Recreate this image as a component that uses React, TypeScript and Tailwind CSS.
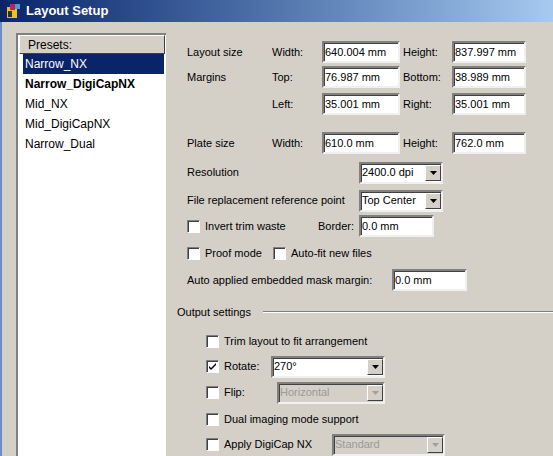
import React from "react";

const input =
  "h-[22px] bg-white border-2 border-t-[#808080] border-l-[#808080] border-b-[#f0f0f0] border-r-[#f0f0f0] shadow-[inset_1px_1px_0_#404040] px-[1px] flex items-center";

function Box({ w, v }: { w: string; v: string }) {
  return <div className={`${input} ${w}`}>{v}</div>;
}

function Check({ on = false }: { on?: boolean }) {
  return (
    <div className="w-[13px] h-[13px] bg-white border border-t-[#808080] border-l-[#808080] border-b-white border-r-white shadow-[inset_1px_1px_0_#404040] flex items-center justify-center shrink-0">
      {on && (
        <svg width="9" height="9" viewBox="0 0 9 9">
          <path d="M1 4l2 2 5-5v2L3 8 1 6z" fill="#000" />
        </svg>
      )}
    </div>
  );
}

function Select({ w, v, dis = false }: { w: string; v: string; dis?: boolean }) {
  return (
    <div className={`${input} ${w} justify-between pr-0 ${dis ? "!bg-[#d4d0c8] text-[#9a9a9a]" : "text-black"}`}>
      <span>{v}</span>
      <div className="w-[16px] h-[16px] bg-[#d4d0c8] border border-t-white border-l-white border-b-[#404040] border-r-[#404040] flex items-center justify-center">
        <svg width="7" height="4" viewBox="0 0 7 4">
          <path d="M0 0h7L3.5 4z" fill={dis ? "#a0a0a0" : "#000"} />
        </svg>
      </div>
    </div>
  );
}

export default function App() {
  const presets = ["Narrow_NX", "Narrow_DigiCapNX", "Mid_NX", "Mid_DigiCapNX", "Narrow_Dual"];
  return (
    <div className="w-[553px] h-[456px] overflow-hidden bg-[#d4d0c8] text-[11px] text-black whitespace-nowrap flex flex-col" style={{ fontFamily: "'Liberation Sans', Tahoma, sans-serif" }}>
      <div className="h-[22px] shrink-0 flex items-center gap-[4px] pl-[6px] text-white font-bold text-[13px] bg-gradient-to-r from-[#0a246a] to-[#a6caf0]">
        <svg width="16" height="16" viewBox="0 0 16 16">
          <rect x="1" y="4" width="10" height="11" fill="#f0c020" />
          <rect x="4" y="1" width="5" height="6" fill="#c02060" />
          <rect x="9" y="1" width="5" height="5" fill="#40a0d0" />
          <rect x="2" y="8" width="4" height="6" fill="#303030" />
        </svg>
        Layout Setup
      </div>
      <div className="flex flex-1 border-l-2 border-[#6c8cc8]">
        <div className="w-[14px] shrink-0" />
        <div className="w-[150px] shrink-0 mt-[11px] bg-white border-l-2 border-t-2 border-[#808080] flex flex-col text-[12px]">
          <div className="h-[19px] mx-[1px] bg-[#d4d0c8] border border-t-white border-l-white border-b-[#404040] border-r-[#404040] pl-[8px] flex items-center">Presets:</div>
          {presets.map((p, i) => (
            <div key={p} className={`h-[20px] ml-[5px] mr-[2px] px-[2px] flex items-center ${i === 0 ? "bg-[#0a246a] text-white" : ""} ${i === 1 ? "font-bold" : ""}`}>{p}</div>
          ))}
        </div>
        <div className="flex-1 pl-[21px] pt-[19px] flex flex-col">
          <div className="flex items-center h-[22px]">
            <span className="w-[85px]">Layout size</span><span className="w-[50px]">Width:</span>
            <Box w="w-[78px]" v="640.004 mm" /><span className="w-[52px] pl-[3px]">Height:</span><Box w="w-[74px]" v="837.997 mm" />
          </div>
          <div className="flex items-center h-[22px] mt-[3px]">
            <span className="w-[85px]">Margins</span><span className="w-[50px]">Top:</span>
            <Box w="w-[78px]" v="76.987 mm" /><span className="w-[52px] pl-[3px]">Bottom:</span><Box w="w-[74px]" v="38.989 mm" />
          </div>
          <div className="flex items-center h-[22px] mt-[5px]">
            <span className="w-[85px]"></span><span className="w-[50px]">Left:</span>
            <Box w="w-[78px]" v="35.001 mm" /><span className="w-[52px] pl-[3px]">Right:</span><Box w="w-[74px]" v="35.001 mm" />
          </div>
          <div className="flex items-center h-[22px] mt-[17px]">
            <span className="w-[85px]">Plate size</span><span className="w-[50px]">Width:</span>
            <Box w="w-[78px]" v="610.0 mm" /><span className="w-[52px] pl-[3px]">Height:</span><Box w="w-[74px]" v="762.0 mm" />
          </div>
          <div className="flex items-center h-[21px] mt-[8px]">
            <span className="w-[172px]">Resolution</span><Select w="w-[84px]" v="2400.0 dpi" />
          </div>
          <div className="flex items-center h-[21px] mt-[7px]">
            <span className="w-[172px]">File replacement reference point</span><Select w="w-[84px]" v="Top Center" />
          </div>
          <div className="flex items-center h-[22px] mt-[4px]">
            <Check /><span className="w-[118px] pl-[5px]">Invert trim waste</span><span className="w-[41px]">Border:</span><Box w="w-[75px]" v="0.0 mm" />
          </div>
          <div className="flex items-center h-[22px] mt-[5px]">
            <Check /><span className="w-[73px] pl-[5px]">Proof mode</span><Check /><span className="pl-[5px]">Auto-fit new files</span>
          </div>
          <div className="flex items-center h-[22px] mt-[5px]">
            <span className="w-[205px]">Auto applied embedded mask margin:</span><Box w="w-[75px]" v="0.0 mm" />
          </div>
          <div className="flex items-center h-[16px] mt-[13px] -ml-[10px]">
            <span className="pr-[12px]">Output settings</span>
            <div className="flex-1 border-t border-b border-t-[#808080] border-b-white" />
          </div>
          <div className="pl-[19px] flex flex-col">
            <div className="flex items-center h-[20px] mt-[11px]"><Check /><span className="pl-[5px]">Trim layout to fit arrangement</span></div>
            <div className="flex items-center h-[21px] mt-[5px]"><Check on /><span className="w-[52px] pl-[5px]">Rotate:</span><Select w="w-[114px]" v="270°" /></div>
            <div className="flex items-center h-[21px] mt-[5px]"><Check /><span className="w-[58px] pl-[5px]">Flip:</span><Select w="w-[108px]" v="Horizontal" dis /></div>
            <div className="flex items-center h-[20px] mt-[6px]"><Check /><span className="pl-[5px]">Dual imaging mode support</span></div>
            <div className="flex items-center h-[21px] mt-[5px]"><Check /><span className="w-[113px] pl-[5px]">Apply DigiCap NX</span><Select w="w-[113px]" v="Standard" dis /></div>
          </div>
        </div>
      </div>
    </div>
  );
}
